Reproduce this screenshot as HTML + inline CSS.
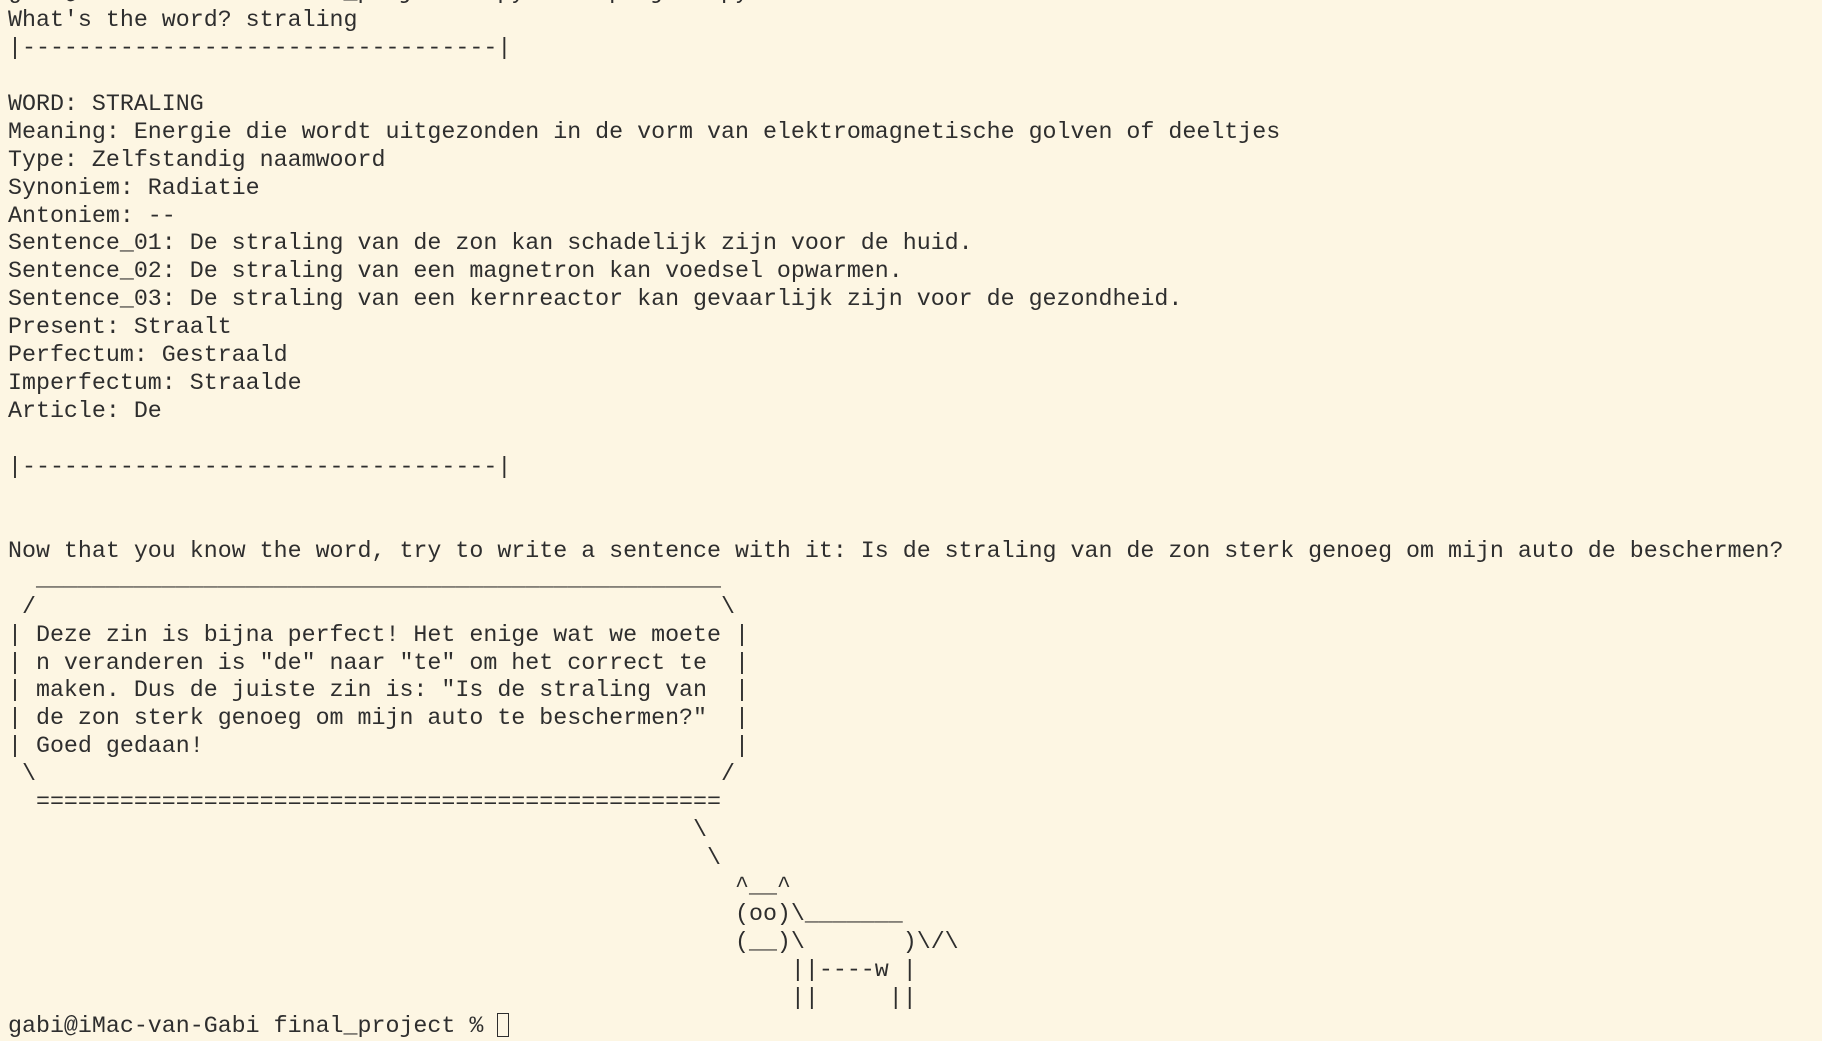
<!DOCTYPE html>
<html><head><meta charset="utf-8"><style>
html,body{margin:0;padding:0;width:1822px;height:1030px;overflow:hidden;background:#fdf6e3;}
pre{position:absolute;left:8px;top:-21px;margin:0;font-family:"Liberation Mono",monospace;font-size:23.3px;line-height:27.93px;color:#2e2e2e;white-space:pre;}
.cur{display:inline-block;width:12px;height:24px;border:1.5px solid #2e2e2e;vertical-align:-5px;box-sizing:border-box;}
</style></head><body>
<pre>gabi@iMac-van-Gabi final_project % python3 project.py
What's the word? straling
|----------------------------------|

WORD: STRALING
Meaning: Energie die wordt uitgezonden in de vorm van elektromagnetische golven of deeltjes
Type: Zelfstandig naamwoord
Synoniem: Radiatie
Antoniem: --
Sentence_01: De straling van de zon kan schadelijk zijn voor de huid.
Sentence_02: De straling van een magnetron kan voedsel opwarmen.
Sentence_03: De straling van een kernreactor kan gevaarlijk zijn voor de gezondheid.
Present: Straalt
Perfectum: Gestraald
Imperfectum: Straalde
Article: De

|----------------------------------|


Now that you know the word, try to write a sentence with it: Is de straling van de zon sterk genoeg om mijn auto de beschermen?
  _________________________________________________
 /                                                 \
| Deze zin is bijna perfect! Het enige wat we moete |
| n veranderen is "de" naar "te" om het correct te  |
| maken. Dus de juiste zin is: "Is de straling van  |
| de zon sterk genoeg om mijn auto te beschermen?"  |
| Goed gedaan!                                      |
 \                                                 /
  =================================================
                                                 \
                                                  \
                                                    ^__^
                                                    (oo)\_______
                                                    (__)\       )\/\
                                                        ||----w |
                                                        ||     ||
gabi@iMac-van-Gabi final_project % <span class="cur"></span></pre>
</body></html>
